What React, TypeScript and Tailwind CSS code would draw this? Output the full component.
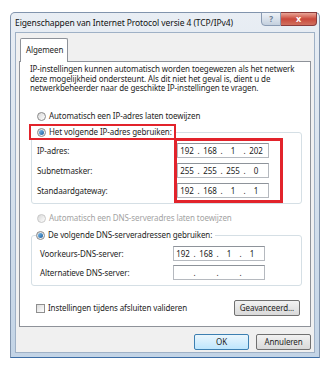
import React from "react";

function Radio({ checked = false, disabled = false }: { checked?: boolean; disabled?: boolean }) {
  return (
    <span
      className={`flex items-center justify-center w-[9px] h-[9px] rounded-full border shrink-0 bg-gradient-to-br from-[#d8d8d8] to-white ${
        disabled ? "border-[#c8c8c8]" : "border-[#8a8a8a]"
      }`}
    >
      {checked && <span className="w-[5px] h-[5px] rounded-full bg-gradient-to-br from-[#7fc0f0] to-[#1b5f9e]" />}
    </span>
  );
}

function IpField({ parts }: { parts: string[] }) {
  return (
    <div className="flex items-center w-[92px] h-[15px] border border-[#b5b9bf] border-t-[#8e939a] bg-white text-[8px] text-[#222]">
      {parts.map((p, i) => (
        <React.Fragment key={i}>
          <span className="w-[18px] text-center">{p}</span>
          {i < 3 && <span className="w-[5px] text-center">.</span>}
        </React.Fragment>
      ))}
    </div>
  );
}

function Row({ label, parts, labelWidth }: { label: string; parts: string[]; labelWidth: string }) {
  return (
    <div className="flex items-center">
      <span className={labelWidth}>{label}</span>
      <IpField parts={parts} />
    </div>
  );
}

export default function App() {
  return (
    <div className="w-[328px] h-[367px] bg-white pt-[12px] pl-[10px] font-['Noto_Sans',sans-serif] text-[8px] tracking-[-0.1px] text-[#1e1e1e] overflow-hidden">
      <div className="w-[310px] h-[346px] rounded-t-[5px] border border-[#8194ad] border-b-[#3d6ea6] bg-gradient-to-b from-[#e9eef4] via-[#d6e1ec] to-[#c3d4e6] px-[4px] flex flex-col">
        {/* title bar */}
        <div className="h-[19px] flex items-start">
          <span className="text-[8.5px] leading-none mt-[6px] text-[#111] whitespace-nowrap">
            Eigenschappen van Internet Protocol versie 4 (TCP/IPv4)
          </span>
          <div className="ml-auto -mt-px flex -mr-[2px]">
            <div className="w-[20px] h-[14px] rounded-bl-[4px] border border-[#8a9bb3] bg-gradient-to-b from-[#eef2f7] to-[#c4d0de] flex items-center justify-center text-[8px] font-bold text-[#6a7c94]">
              ?
            </div>
            <div className="w-[36px] h-[14px] rounded-br-[4px] border border-l-0 border-[#8b3b3b] bg-gradient-to-b from-[#e8a598] via-[#c9483b] to-[#d0705f] flex items-center justify-center text-[9px] font-bold text-white">
              x
            </div>
          </div>
        </div>
        {/* client area */}
        <div className="flex-1 mb-[4px] bg-[#f0f0f0] border border-[#9fb1c6] px-[3px] pt-[5px] flex flex-col">
          <div className="flex">
            <div className="ml-[1px] w-[48px] h-[24px] bg-white border border-b-0 border-[#8e9299] rounded-t-[2px] px-[5px] pt-[5px] relative z-10 -mb-px">
              Algemeen
            </div>
          </div>
          <div className="h-[266px] bg-white border border-[#8e9299] flex flex-col whitespace-nowrap">
            <p className="pl-[10px] pt-[2px] leading-[9.7px]">
              IP-instellingen kunnen automatisch worden toegewezen als het netwerk
              <br />
              deze mogelijkheid ondersteunt. Als dit niet het geval is, dient u de
              <br />
              netwerkbeheerder naar de geschikte IP-instellingen te vragen.
            </p>
            <div className="mt-[17px] pl-[17px] h-[12px] flex items-center gap-[3px]">
              <Radio />
              <span>Automatisch een IP-adres laten toewijzen</span>
            </div>
            <fieldset className="mt-[2px] ml-[11px] mr-[8px] border border-[#d5dfe5] rounded-[3px] pb-[5px]">
              <legend className="-ml-[3px] p-0">
                <span className="flex items-center gap-[3px] h-[16px] w-[147px] border-2 border-[#e2232b] pl-[6px] bg-white">
                  <Radio checked />
                  <span>Het volgende IP-adres gebruiken:</span>
                </span>
              </legend>
              <div className="relative mt-[3px] flex flex-col gap-[5px] pl-[5px]">
                <Row label="IP-adres:" parts={["192", "168", "1", "202"]} labelWidth="w-[140px]" />
                <Row label="Subnetmasker:" parts={["255", "255", "255", "0"]} labelWidth="w-[140px]" />
                <Row label="Standaardgateway:" parts={["192", "168", "1", "1"]} labelWidth="w-[140px]" />
                <div className="absolute left-[142px] -top-[5px] w-[109px] h-[65px] border-[3px] border-[#e2232b]" />
              </div>
            </fieldset>
            <div className="mt-[8px] pl-[17px] h-[12px] flex items-center gap-[3px] text-[#a3a3a3]">
              <Radio disabled />
              <span>Automatisch een DNS-serveradres laten toewijzen</span>
            </div>
            <fieldset className="mt-[5px] ml-[11px] mr-[8px] border border-[#d5dfe5] rounded-[3px] pb-[5px]">
              <legend className="ml-[4px] pr-[3px] bg-white">
                <span className="flex items-center gap-[3px] h-[12px]">
                  <Radio checked />
                  <span>De volgende DNS-serveradressen gebruiken:</span>
                </span>
              </legend>
              <div className="mt-[5px] flex flex-col gap-[4px] pl-[8px]">
                <Row label="Voorkeurs-DNS-server:" parts={["192", "168", "1", "1"]} labelWidth="w-[133px]" />
                <Row label="Alternatieve DNS-server:" parts={["", "", "", ""]} labelWidth="w-[133px]" />
              </div>
            </fieldset>
            <div className="mt-[14px] pl-[16px] pr-[10px] flex items-center">
              <span className="w-[9px] h-[9px] border border-[#8f8f8f] bg-gradient-to-br from-[#dcdcdc] to-white mr-[3px]" />
              <span>Instellingen tijdens afsluiten valideren</span>
              <button className="ml-auto w-[66px] h-[16px] rounded-[2px] border border-[#707070] bg-gradient-to-b from-[#f2f2f2] to-[#d9d9d9] leading-none">
                Geavanceerd...
              </button>
            </div>
          </div>
          <div className="mt-[7px] flex justify-end gap-[7px]">
            <button className="w-[55px] h-[16px] rounded-[2px] border border-[#3c7fb1] bg-gradient-to-b from-[#eaf6fd] to-[#bee6fd] leading-none">
              OK
            </button>
            <button className="w-[55px] h-[16px] rounded-[2px] border border-[#707070] bg-gradient-to-b from-[#f2f2f2] to-[#d9d9d9] leading-none">
              Annuleren
            </button>
          </div>
        </div>
      </div>
    </div>
  );
}
